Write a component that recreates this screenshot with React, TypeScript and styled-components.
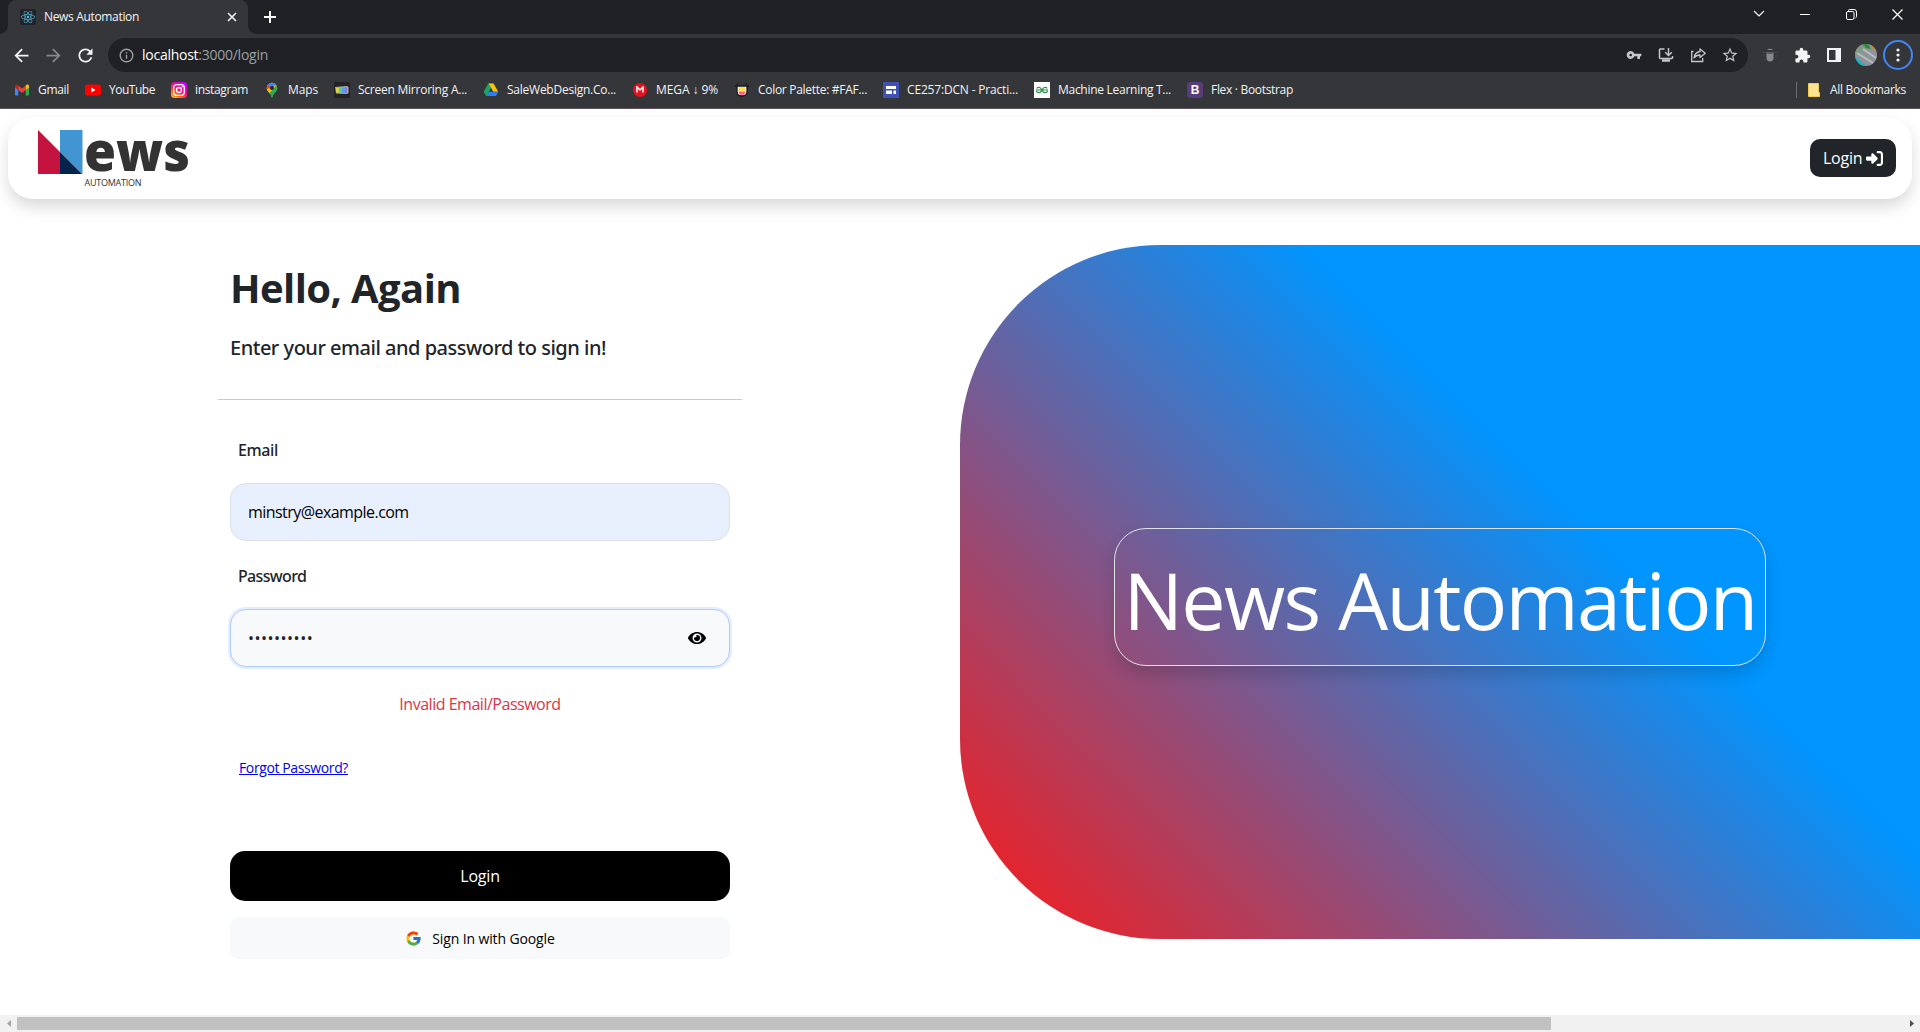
import React from "react";
import styled, { createGlobalStyle } from "styled-components";
import { FaEye, FaReact } from "react-icons/fa";
import { FaRightToBracket } from "react-icons/fa6";
import { FcGoogle } from "react-icons/fc";
import {
  MdArrowBack,
  MdArrowForward,
  MdExtension,
  MdRefresh,
  MdStarBorder,
  MdVpnKey,
} from "react-icons/md";

const GlobalStyle = createGlobalStyle`
  *, *::before, *::after { box-sizing: border-box; }
  body {
    margin: 0;
    overflow: hidden;
    background: #fff;
    color: #212529;
    font-family: "Open Sans", "Noto Sans", sans-serif;
    font-size: 16px;
    line-height: 24px;
  }
  h1, h4, p { margin: 0; }
  svg { display: block; flex: none; }
`;

/* ---------- browser frame ---------- */

const Window = styled.div`
  display: flex;
  flex-direction: column;
  width: 1920px;
  height: 1032px;
  overflow: hidden;
`;

const TabStrip = styled.div`
  display: flex;
  align-items: flex-start;
  flex: none;
  height: 34px;
  background: #202124;
  color: #fff;
`;

const TabFoot = styled.div<{ $side: "left" | "right" }>`
  align-self: flex-end;
  width: 8px;
  height: 8px;
  background: radial-gradient(
    circle at ${(p) => (p.$side === "left" ? "0 0" : "100% 0")},
    #202124 7.5px,
    #35363a 8px
  );
`;

const Tab = styled.div`
  display: flex;
  align-items: center;
  width: 240px;
  height: 34px;
  padding: 0 11px 0 12px;
  border-radius: 8px 8px 0 0;
  background: #35363a;
`;

const TabTitle = styled.span`
  flex: 1;
  margin-left: 8px;
  font-size: 12px;
  letter-spacing: -0.334px;
  color: #f1f3f4;
`;

const Favicon = styled.span`
  display: grid;
  place-items: center;
  width: 16px;
  height: 16px;
  border-radius: 2px;
  background: #20232a;
  color: #53b8d1;
`;

const NewTab = styled.div`
  display: grid;
  place-items: center;
  width: 28px;
  height: 28px;
  margin-top: 3px;
`;

const WindowControls = styled.div`
  display: flex;
  align-items: center;
  height: 28px;
  margin-left: auto;
`;

const Control = styled.div`
  display: grid;
  place-items: center;
  width: 46px;
  height: 28px;
`;

const Toolbar = styled.div`
  display: flex;
  align-items: center;
  flex: none;
  height: 42px;
  background: #35363a;
  color: #f1f3f4;
`;

const NavButton = styled.div<{ $dim?: boolean }>`
  display: grid;
  place-items: center;
  width: 32px;
  height: 34px;
  color: ${(p) => (p.$dim ? "#87888b" : "#f1f3f4")};
`;

const NavButtons = styled.div`
  display: flex;
  margin: 0 7px 0 5px;
`;

const Omnibox = styled.div`
  display: flex;
  align-items: center;
  width: 1640px;
  height: 34px;
  padding: 0 2px 0 11px;
  border-radius: 17px;
  background: #202124;
  color: #c5c6c8;
`;

const Url = styled.span`
  flex: 1;
  margin-left: 8px;
  font-size: 14px;
  letter-spacing: -0.258px;
  color: #9aa0a6;

  b {
    font-weight: 400;
    color: #fff;
  }
`;

const OmniButton = styled.div`
  display: grid;
  place-items: center;
  width: 32px;
`;

const Extensions = styled.div`
  display: flex;
  align-items: center;
  margin-left: 6px;
`;

const Avatar = styled.div`
  width: 22px;
  height: 22px;
  margin: 0 5px;
  border-radius: 50%;
  overflow: hidden;
`;

const MenuRing = styled.div`
  display: grid;
  place-items: center;
  width: 30px;
  height: 30px;
  border: 2px solid #4285f4;
  border-radius: 50%;
`;

const MenuSlot = styled.div`
  margin-left: 1px;
`;

const BookmarkBar = styled.div`
  display: flex;
  align-items: center;
  flex: none;
  height: 33px;
  padding: 0 14px 5px 14px;
  border-bottom: 1px solid #5b555b;
  background: #35363a;
  color: #f1f3f4;
  font-size: 12px;
`;

const Bookmark = styled.div<{ $width: number; $track: number }>`
  display: flex;
  align-items: center;
  gap: 8px;
  width: ${(p) => p.$width}px;
  letter-spacing: ${(p) => p.$track}px;
  white-space: nowrap;
`;

const AllBookmarks = styled.div`
  display: flex;
  align-items: center;
  gap: 10px;
  height: 16px;
  margin-left: auto;
  padding-left: 11px;
  border-left: 1px solid #6c6d70;
  letter-spacing: -0.305px;
  white-space: nowrap;
`;

/* ---------- page ---------- */

const Page = styled.div`
  flex: 1;
  overflow: hidden;
  background: #fff;
`;

const Navbar = styled.header`
  display: flex;
  align-items: center;
  justify-content: space-between;
  height: 82px;
  margin: 8px 8px 0;
  padding: 0 16px 0 30px;
  border-radius: 25px;
  background: #fff;
  box-shadow: 0 8px 16px rgba(0, 0, 0, 0.15);
`;

const HeaderLogin = styled.button`
  display: flex;
  align-items: center;
  gap: 4px;
  width: 86px;
  height: 38px;
  padding: 0 0 0 13px;
  border: 0;
  border-radius: 10px;
  background: #212529;
  color: #fff;
  font: 400 16px/24px "Open Sans", sans-serif;
  letter-spacing: -0.25px;
`;

const Columns = styled.main`
  display: grid;
  grid-template-columns: 960px 1400px;
`;

const FormColumn = styled.section`
  display: flex;
  flex-direction: column;
  width: 524px;
  margin: 65px auto 0;
`;

const Intro = styled.div`
  padding: 0 12px 39px;
  border-bottom: 1px solid #c8c9ca;
  white-space: nowrap;
`;

const Title = styled.h1`
  font-size: 40px;
  font-weight: 700;
  line-height: 48px;
  letter-spacing: -0.59px;
`;

const Subtitle = styled.h4`
  margin-top: 24px;
  font-family: "Noto Sans", sans-serif;
  font-size: 20px;
  font-weight: 500;
  line-height: 24px;
  letter-spacing: -0.487px;
`;

const Form = styled.form`
  display: flex;
  flex-direction: column;
  padding: 38px 12px 0;
`;

const Label = styled.label<{ $track: number }>`
  margin: 0 0 21px 8px;
  font-family: "Noto Sans", sans-serif;
  font-weight: 500;
  letter-spacing: ${(p) => p.$track}px;
`;

const Field = styled.div<{ $active?: boolean }>`
  display: flex;
  align-items: center;
  height: 58px;
  margin-bottom: ${(p) => (p.$active ? 25 : 23)}px;
  padding: 0 23px 0 17px;
  border: 1px solid ${(p) => (p.$active ? "#b1cdf3" : "#dbe0e8")};
  border-radius: 16px;
  background: ${(p) => (p.$active ? "#f8f9fa" : "#e8f0fe")};
  box-shadow: ${(p) => (p.$active ? "0 0 0 2px #e2edfd" : "none")};
  color: #000;
`;

const Input = styled.input<{ $track: number }>`
  flex: 1;
  padding: 0;
  border: 0;
  outline: 0;
  background: transparent;
  color: ${(p) => (p.type === "password" ? "#212529" : "#000")};
  font: 400 16px/24px "Open Sans", sans-serif;
  letter-spacing: ${(p) => p.$track}px;
`;

const ErrorText = styled.p`
  color: #dc3545;
  letter-spacing: -0.48px;
  text-align: center;
`;

const Forgot = styled.a`
  align-self: flex-start;
  margin: 41px 0 0 9px;
  color: #0000ee;
  font-size: 14px;
  line-height: 21px;
  letter-spacing: -0.386px;
`;

const Submit = styled.button`
  height: 50px;
  margin-top: 73px;
  border: 0;
  border-radius: 15px;
  background: #000;
  color: #fff;
  font: 400 16px/24px "Open Sans", sans-serif;
  letter-spacing: -0.2px;
`;

const GoogleButton = styled.button`
  display: flex;
  align-items: center;
  justify-content: center;
  gap: 10px;
  height: 42px;
  margin-top: 16px;
  border: 0;
  border-radius: 8px;
  background: #f8f9fa;
  color: #000;
  font: 400 14px/21px "Open Sans", sans-serif;
  letter-spacing: -0.121px;
`;

const Panel = styled.section`
  height: 694px;
  margin-top: 46px;
  padding: 283px 0 0 154px;
  border-radius: 200px 0 0 200px;
  background: linear-gradient(45deg, #ff1715 0%, #0095ff 50%);
`;

const Banner = styled.div`
  display: flex;
  justify-content: center;
  width: 652px;
  height: 138px;
  padding-top: 11px;
  border: 1px solid #dee2e6;
  border-radius: 32px;
  box-shadow: 0 8px 16px rgba(0, 0, 0, 0.15);
  color: #fff;
  font-size: 79px;
  line-height: 120px;
  letter-spacing: -1.7px;
  white-space: nowrap;
`;

const Scrollbar = styled.div`
  display: flex;
  align-items: center;
  flex: none;
  height: 17px;
  background: #f1f1f1;
`;

const Arrow = styled.div`
  display: grid;
  place-items: center;
  width: 17px;
  height: 17px;
`;

const Track = styled.div`
  flex: 1;
`;

const Thumb = styled.div`
  width: 1534px;
  height: 13px;
  background: #c1c1c1;
`;

/* ---------- drawings ---------- */

const Gmail = () => (
  <svg width="16" height="16" viewBox="0 0 16 16">
    <path d="M1 4v8.5c0 .6.4 1 1 1h2.3V6.7z" fill="#4285f4" />
    <path d="M15 4v8.500c0 .6-.4 1-1 1h-2.300V6.700z" fill="#34a853" />
    <path d="M11.700 3.600v4.500L15 5.600V4.200c0-1.600-1.700-2.200-2.700-1.300z" fill="#fbbc04" />
    <path d="M4.300 8.100V3.600L8 6.400l3.700-2.800v4.500L8 10.900z" fill="#ea4335" />
    <path d="M1 4.200v1.400l3.300 2.500V3.600l-.6-.6C2.600 2.200 1 2.700 1 4.200z" fill="#c5221f" />
  </svg>
);

const YouTube = () => (
  <svg width="16" height="16" viewBox="0 0 16 16">
    <rect y="2.500" width="16" height="11" rx="2.600" fill="#f00" />
    <path d="M6.400 5.600v4.800L10.500 8z" fill="#fff" />
  </svg>
);

const Instagram = () => (
  <svg width="16" height="16" viewBox="0 0 16 16">
    <defs>
      <linearGradient id="ig" x1="0" y1="1" x2="0.700" y2="0">
        <stop offset="0" stopColor="#ffd21f" />
        <stop offset="0.350" stopColor="#ff5a1f" />
        <stop offset="0.600" stopColor="#ff0a7a" />
        <stop offset="1" stopColor="#c800ff" />
      </linearGradient>
    </defs>
    <rect width="16" height="16" rx="3.500" fill="url(#ig)" />
    <rect x="2.700" y="2.700" width="10.600" height="10.600" rx="3" fill="none" stroke="#fff" strokeWidth="1.300" />
    <circle cx="8" cy="8" r="2.500" fill="none" stroke="#fff" strokeWidth="1.300" />
    <circle cx="11.200" cy="4.800" r=".7" fill="#fff" />
  </svg>
);

const Maps = () => (
  <svg width="16" height="16" viewBox="0 0 16 16">
    <defs>
      <clipPath id="pin">
        <path d="M8 .8a5.300 5.300 0 0 1 5.300 5.300c0 3.600-4 5-4.600 8.600-.2.900-1.200.9-1.400 0C6.700 11.100 2.700 9.700 2.700 6.100A5.300 5.300 0 0 1 8 .8z" />
      </clipPath>
    </defs>
    <g clipPath="url(#pin)">
      <rect width="16" height="16" fill="#34a853" />
      <path d="M0 0h16L3 12 0 10z" fill="#fbbc04" />
      <path d="M0 0h16L8 6 3.500 10 0 7z" fill="#ea4335" />
      <path d="M3.500 0H16v3L8 6 3.800 3z" fill="#4285f4" />
      <path d="M2 12V8l3-2 3 2 3-5 3 3-6 6z" fill="#fbbc04" />
      <path d="M14 4v5l-6 7-2.500-5L12 4z" fill="#34a853" />
    </g>
    <circle cx="8" cy="6" r="1.900" fill="#202124" />
  </svg>
);

const Mirror = () => (
  <svg width="16" height="16" viewBox="0 0 16 16">
    <rect width="16" height="16" fill="#242424" />
    <path d="M1 5l12-1 1.500 1v6L13 12l-11-.5z" fill="#a9a9b4" />
    <path d="M2 6h4v4.500H2z" fill="#dfd43c" />
    <path d="M5 6h4v4.500H5z" fill="#57c7a0" />
    <path d="M8 5.600h4.500v5.200H8z" fill="#5b9bea" />
    <path d="M11 5.300h2v5.500h-2z" fill="#8c7ad0" />
  </svg>
);

const Drive = () => (
  <svg width="16" height="16" viewBox="0 0 16 16">
    <path d="M5.300 1.500h5L5.300 10.200 3.200 14 .8 9.700z" fill="#0fa45a" />
    <path d="M5.500 1.500h5L15.300 9.700h-5z" fill="#ffc107" />
    <path d="M5.600 9.700h9.700L12.900 14H3.200z" fill="#2f7df6" />
    <path d="M.8 9.700L3.200 14l2.400-4.300L8 5.800 5.500 1.500z" fill="#1ea362" />
  </svg>
);

const MegaMark = styled.span`
  display: grid;
  place-items: center;
  width: 14px;
  height: 14px;
  margin: 0 1px;
  border-radius: 50%;
  background: #e8101c;
`;

const Mega = () => (
  <MegaMark>
    <svg width="8" height="7" viewBox="0 0 8 7">
      <path d="M1 6.500V1l3 3 3-3v5.500" fill="none" stroke="#fff" strokeWidth="1.500" />
    </svg>
  </MegaMark>
);

const Palette = () => (
  <svg width="16" height="16" viewBox="0 0 16 16">
    <path d="M1 4.300h14M3 1.700h1M12 1.700h1" stroke="#17181a" strokeWidth="1.600" />
    <path d="M3 4v5.500c0 6 10 6 10 0V4z" fill="#fff" stroke="#17181a" strokeWidth="1.300" />
    <path d="M4.500 5h7v3.800h-7z" fill="#ffe03e" />
    <path d="M4.500 8.800h7v1.400h-7z" fill="#ffb08a" />
    <path d="M4.500 10h7c-.4 4-6.600 4-7 0z" fill="#ff5d7d" />
  </svg>
);

const Sites = () => (
  <svg width="16" height="16" viewBox="0 0 16 16">
    <rect width="16" height="16" fill="#3f51b5" />
    <path d="M3 4h10v3H3zM3 8.500h6v3.500H3zM10.500 8.500H13V12h-2.500z" fill="#fff" />
  </svg>
);

const Geeks = () => (
  <svg width="16" height="16" viewBox="0 0 16 16">
    <rect width="16" height="16" fill="#fff" />
    <g fill="none" stroke="#2f8d46" strokeWidth="1.200">
      <path d="M2 8h5.500c0 3.300-5 3.300-5 .8M7.400 8c0-3-3.200-3.200-4.700-1.600" />
      <path d="M14 8H8.500c0 3.300 5 3.300 5 .8M8.600 8c0-3 3.200-3.200 4.700-1.600" />
    </g>
  </svg>
);

const BootstrapMark = styled.span`
  display: grid;
  place-items: center;
  width: 16px;
  height: 16px;
  border-radius: 3px;
  background: #563d7c;
  color: #fff;
  font: 700 12px/16px "Liberation Sans", sans-serif;
  letter-spacing: 0;
`;

const NewsLogo = () => (
  <svg width="160" height="82" viewBox="0 -12 160 82">
    <path d="M0 1l22 22v22H0z" fill="#c4133f" />
    <path d="M22 1h22.500v44.500L22 23z" fill="#4295d3" />
    <path d="M22 23l22 22H22z" fill="#02234b" />
    <text x="46" y="41.500" fontFamily="Open Sans" fontWeight="800" fontSize="54" textLength="106" lengthAdjust="spacingAndGlyphs" fill="#333">
      ews
    </text>
    <text x="46.500" y="57" fontFamily="Open Sans" fontSize="9" textLength="57" fill="#333">
      AUTOMATION
    </text>
  </svg>
);

const bookmarks = [
  { label: "Gmail", width: 71, track: -0.313, icon: <Gmail /> },
  { label: "YouTube", width: 86, track: -0.478, icon: <YouTube /> },
  { label: "instagram", width: 93, track: -0.361, icon: <Instagram /> },
  { label: "Maps", width: 70, track: -0.133, icon: <Maps /> },
  { label: "Screen Mirroring A...", width: 149, track: -0.239, icon: <Mirror /> },
  { label: "SaleWebDesign.Co...", width: 149, track: -0.244, icon: <Drive /> },
  { label: "MEGA ↓ 9%", width: 102, track: -0.089, icon: <Mega /> },
  { label: "Color Palette: #FAF...", width: 149, track: -0.293, icon: <Palette /> },
  { label: "CE257:DCN - Practi...", width: 151, track: -0.175, icon: <Sites /> },
  { label: "Machine Learning T...", width: 153, track: -0.278, icon: <Geeks /> },
  { label: "Flex · Bootstrap", width: 110, track: -0.313, icon: <BootstrapMark>B</BootstrapMark> },
];

const BrowserChrome = () => (
  <>
    <TabStrip>
      <TabFoot $side="left" />
      <Tab>
        <Favicon>
          <FaReact size={14} />
        </Favicon>
        <TabTitle>News Automation</TabTitle>
        <svg width="10" height="10" viewBox="0 0 10 10">
          <path d="M1 1l8 8M9 1L1 9" stroke="#f1f3f4" strokeWidth="1.600" />
        </svg>
      </Tab>
      <TabFoot $side="right" />
      <NewTab>
        <svg width="12" height="12" viewBox="0 0 12 12">
          <path d="M6 0v12M0 6h12" stroke="#fff" strokeWidth="2" />
        </svg>
      </NewTab>
      <WindowControls>
        <Control>
          <svg width="12" height="8" viewBox="0 0 12 8">
            <path d="M1 1l5 5 5-5" fill="none" stroke="#fff" strokeWidth="1.100" />
          </svg>
        </Control>
        <Control>
          <svg width="10" height="1" viewBox="0 0 10 1">
            <rect width="10" height="1" fill="#fff" />
          </svg>
        </Control>
        <Control>
          <svg width="11" height="11" viewBox="0 0 11 11" fill="none" stroke="#fff">
            <rect x="0.500" y="2.500" width="7.500" height="8" rx="1.500" />
            <path d="M2.500 2V1.500q0-1 1-1H8q2.500 0 2.500 2.500v4.500q0 1-1 1.500" />
          </svg>
        </Control>
        <Control>
          <svg width="11" height="11" viewBox="0 0 11 11">
            <path d="M.5.5l10 10M10.500.5l-10 10" stroke="#fff" strokeWidth="1.200" />
          </svg>
        </Control>
      </WindowControls>
    </TabStrip>
    <Toolbar>
      <NavButtons>
        <NavButton>
          <MdArrowBack size={21} />
        </NavButton>
        <NavButton $dim>
          <MdArrowForward size={21} />
        </NavButton>
        <NavButton>
          <MdRefresh size={21} />
        </NavButton>
      </NavButtons>
      <Omnibox>
        <svg width="15" height="15" viewBox="0 0 15 15" fill="none" stroke="#9aa0a6" strokeWidth="1.400">
          <circle cx="7.500" cy="7.500" r="6.300" />
          <path d="M7.500 6.800v4M7.500 4v1.500" />
        </svg>
        <Url>
          <b>localhost</b>:3000/login
        </Url>
        <OmniButton>
          <MdVpnKey size={16} />
        </OmniButton>
        <OmniButton>
          <svg width="16" height="16" viewBox="0 0 16 16" fill="none" stroke="currentColor" strokeWidth="1.500">
            <path d="M6.500 2H2.200q-.7 0-.7.700v8q0 .7.7.7h11.600q.7 0 .7-.7V9" />
            <path d="M10.500 1v6.800M7.200 5.200l3.300 3.300 3.300-3.300" />
            <path d="M4 13.500h8" strokeWidth="2.500" />
          </svg>
        </OmniButton>
        <OmniButton>
          <svg width="17" height="16" viewBox="0 0 17 16" fill="none" stroke="currentColor" strokeWidth="1.300">
            <path d="M3.500 4.500H1.700v10h11V11" />
            <path d="M10 2l5.300 4.200L10 10.500V8C7 8 5.300 9 4 11c.4-3.500 2.500-6 6-6.500z" strokeLinejoin="round" />
          </svg>
        </OmniButton>
        <OmniButton>
          <MdStarBorder size={18} />
        </OmniButton>
      </Omnibox>
      <Extensions>
        <NavButton>
          <svg width="14" height="16" viewBox="0 0 14 16">
            <path d="M4 3q3-2.500 6 0z" fill="#8b8c8f" />
            <path d="M0 5.500h2M12 5.500h2M0 9h2M12 9h2M1 13l2-1M13 13l-2-1" stroke="#47484c" />
            <path d="M3.500 5h7v5.500q0 4-3.500 4t-3.500-4z" fill="#88898c" />
            <path d="M3.500 5h7v2h-7z" fill="#5b5c60" />
          </svg>
        </NavButton>
        <NavButton>
          <MdExtension size={17} />
        </NavButton>
        <NavButton>
          <svg width="14" height="14" viewBox="0 0 14 14">
            <path d="M0 0h14v14H0zM2 2v10h6.500V2z" fill="#f1f3f4" fillRule="evenodd" />
          </svg>
        </NavButton>
        <Avatar>
          <svg width="22" height="22" viewBox="0 0 22 22">
            <rect width="22" height="22" fill="#8e9499" />
            <path d="M0 0h14l-1 5-8 4-5 3z" fill="#7f9a86" />
            <path d="M7 0h6l3 5-5-1z" fill="#2e8b3c" />
            <path d="M15 0h7v8l-5-4z" fill="#cf8a2e" />
            <path d="M0 13l11 9H0z" fill="#10b3c8" />
            <path d="M2 9l16 10M8 5l13 9" stroke="#b9bec2" strokeWidth="2" />
          </svg>
        </Avatar>
        <MenuSlot>
          <MenuRing>
            <svg width="4" height="14" viewBox="0 0 4 14" fill="#f1f3f4">
              <circle cx="2" cy="2" r="1.600" />
              <circle cx="2" cy="7" r="1.600" />
              <circle cx="2" cy="12" r="1.600" />
            </svg>
          </MenuRing>
        </MenuSlot>
      </Extensions>
    </Toolbar>
    <BookmarkBar>
      {bookmarks.map((b) => (
        <Bookmark key={b.label} $width={b.width} $track={b.track}>
          {b.icon}
          {b.label}
        </Bookmark>
      ))}
      <AllBookmarks>
        <svg width="12" height="14" viewBox="0 0 12 14">
          <path d="M.5.5h10V9.500h1v4H.5z" fill="#fde293" stroke="#f2cc4d" />
        </svg>
        All Bookmarks
      </AllBookmarks>
    </BookmarkBar>
  </>
);

export default function App() {
  return (
    <Window>
      <GlobalStyle />
      <BrowserChrome />
      <Page>
        <Navbar>
          <NewsLogo />
          <HeaderLogin>
            Login
            <FaRightToBracket size={17} />
          </HeaderLogin>
        </Navbar>
        <Columns>
          <FormColumn>
            <Intro>
              <Title>Hello, Again</Title>
              <Subtitle>Enter your email and password to sign in!</Subtitle>
            </Intro>
            <Form>
              <Label $track={-0.372}>Email</Label>
              <Field>
                <Input type="text" readOnly value="minstry@example.com" $track={-0.55} />
              </Field>
              <Label $track={-0.66}>Password</Label>
              <Field $active>
                <Input type="password" readOnly value="0123456789" $track={0.5} />
                <FaEye size={18} />
              </Field>
              <ErrorText>Invalid Email/Password</ErrorText>
              <Forgot href="#">Forgot Password?</Forgot>
              <Submit type="button">Login</Submit>
              <GoogleButton type="button">
                <FcGoogle size={17} />
                Sign In with Google
              </GoogleButton>
            </Form>
          </FormColumn>
          <Panel>
            <Banner>News Automation</Banner>
          </Panel>
        </Columns>
      </Page>
      <Scrollbar>
        <Arrow>
          <svg width="4" height="7" viewBox="0 0 4 7">
            <path d="M4 0v7L0 3.500z" fill="#a3a3a3" />
          </svg>
        </Arrow>
        <Track>
          <Thumb />
        </Track>
        <Arrow>
          <svg width="4" height="7" viewBox="0 0 4 7">
            <path d="M0 0v7l4-3.500z" fill="#505050" />
          </svg>
        </Arrow>
      </Scrollbar>
    </Window>
  );
}
